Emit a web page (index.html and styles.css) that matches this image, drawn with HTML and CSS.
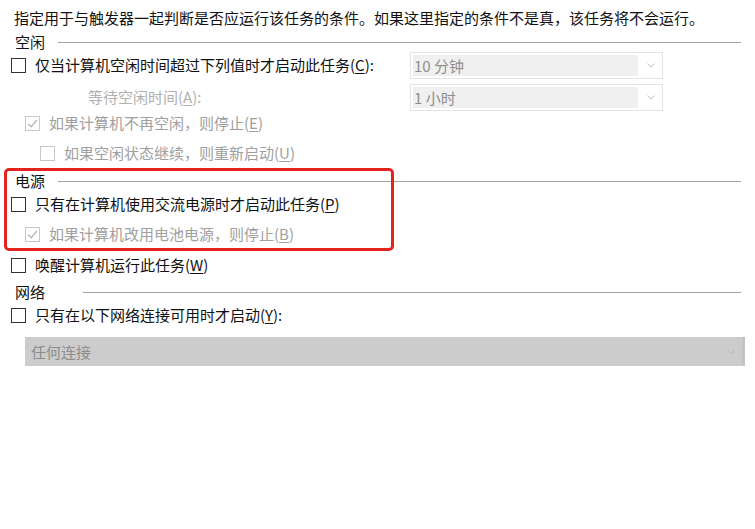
FILE: index.html
```html
<!DOCTYPE html>
<html lang="zh-CN">
<head>
<meta charset="utf-8">
<title>条件</title>
<link rel="stylesheet" href="styles.css">
</head>
<body>
<div class="page">
  <p class="desc">指定用于与触发器一起判断是否应运行该任务的条件。如果这里指定的条件不是真，该任务将不会运行。</p>

  <div class="head head-idle"><span>空闲</span><i class="rule"></i></div>

  <div class="row row-c">
    <div class="lbl-cell">
      <label class="opt"><span class="cb"></span><span>仅当计算机空闲时间超过下列值时才启动此任务(<u>C</u>):</span></label>
    </div>
    <div class="combo"><span class="combo-val">10 分钟</span><span class="combo-btn"><svg width="8" height="5" viewBox="0 0 8 5"><polyline points="0.5,0.5 4,4 7.5,0.5" fill="none" stroke="#c4c4c4" stroke-width="1"/></svg></span></div>
  </div>

  <div class="row row-a">
    <div class="lbl-cell lbl-wait"><span class="dim dim-light">等待空闲时间(<u>A</u>):</span></div>
    <div class="combo"><span class="combo-val">1 小时</span><span class="combo-btn"><svg width="8" height="5" viewBox="0 0 8 5"><polyline points="0.5,0.5 4,4 7.5,0.5" fill="none" stroke="#c4c4c4" stroke-width="1"/></svg></span></div>
  </div>

  <div class="row row-e indent1">
    <label class="opt"><span class="cb off"><svg width="13" height="13" viewBox="0 0 13 13"><polyline points="2.2,6.8 5.2,9.8 10.8,3" fill="none" stroke="#b4b4b4" stroke-width="1.3"/></svg></span><span class="dim">如果计算机不再空闲，则停止(<u>E</u>)</span></label>
  </div>

  <div class="row row-u indent2">
    <label class="opt"><span class="cb off"></span><span class="dim">如果空闲状态继续，则重新启动(<u>U</u>)</span></label>
  </div>

  <div class="power">
    <div class="head"><span>电源</span><i class="rule"></i></div>
    <div class="row row-p">
      <label class="opt"><span class="cb"></span><span>只有在计算机使用交流电源时才启动此任务(<u>P</u>)</span></label>
    </div>
    <div class="row row-b indent1">
      <label class="opt"><span class="cb off"><svg width="13" height="13" viewBox="0 0 13 13"><polyline points="2.2,6.8 5.2,9.8 10.8,3" fill="none" stroke="#b4b4b4" stroke-width="1.3"/></svg></span><span class="dim">如果计算机改用电池电源，则停止(<u>B</u>)</span></label>
    </div>
  </div>

  <div class="row row-w">
    <label class="opt"><span class="cb"></span><span>唤醒计算机运行此任务(<u>W</u>)</span></label>
  </div>

  <div class="head head-net"><span>网络</span><i class="rule rule-net"></i></div>

  <div class="row row-y">
    <label class="opt"><span class="cb"></span><span>只有在以下网络连接可用时才启动(<u>Y</u>):</span></label>
  </div>

  <div class="net-combo"><span class="net-val">任何连接</span><svg width="8" height="5" viewBox="0 0 8 5"><polyline points="0.5,0.5 4,4 7.5,0.5" fill="none" stroke="#b8b8b8" stroke-width="1"/></svg></div>
</div>
</body>
</html>
```
FILE: styles.css
```css
html, body {
  margin: 0;
  background: #ffffff;
}
body {
  font-family: "Noto Sans CJK SC", "Microsoft YaHei", sans-serif;
  font-size: 15px;
  color: #111111;
}
.page {
  display: flex;
  flex-direction: column;
  padding: 7px 10px 0 0;
}
.desc {
  margin: 0;
  padding-left: 14px;
  height: 22px;
  line-height: 22px;
  white-space: nowrap;
}
u {
  text-decoration: underline;
  text-underline-offset: 2px;
}
.head {
  display: flex;
  align-items: center;
  height: 22px;
  line-height: 22px;
  padding-left: 15px;
}
.head-idle { margin-top: 2px; }
.head-net { margin-top: 5px; }
.rule {
  flex: 1;
  height: 1px;
  margin: 1px 4px 0 13px;
  background: #a3a3a3;
}
.rule-net { margin-left: 38px; }

.row {
  display: flex;
  align-items: center;
  height: 22px;
  line-height: 22px;
  padding-left: 11px;
  white-space: nowrap;
}
.indent1 { padding-left: 25px; }
.indent2 { padding-left: 40px; }
.row-c { margin-top: 1px; }
.row-a { margin-top: 10px; }
.row-e { margin-top: 4px; }
.row-u { margin-top: 8px; }
.row-p { margin-top: 1px; }
.row-b { margin-top: 8px; }
.row-w { margin-top: 9px; }
.row-y { margin-top: 1px; }

.opt {
  display: flex;
  align-items: center;
  gap: 9px;
}
.cb {
  flex: none;
  width: 15px;
  height: 15px;
  box-sizing: border-box;
  border: 1px solid #333333;
  background: #ffffff;
  display: flex;
  align-items: center;
  justify-content: center;
}
.cb.off { border-color: #c8c8c8; }
.dim { color: #a0a0a0; }
.dim-light { color: #b0b0b0; }

.lbl-cell {
  flex: none;
  width: 399px;
}
.lbl-wait { padding-left: 77px; box-sizing: border-box; }

.combo {
  flex: none;
  width: 253px;
  height: 27px;
  box-sizing: border-box;
  border: 1px solid #e4e4e4;
  padding: 2px;
  display: flex;
  background: #ffffff;
}
.combo-val {
  flex: none;
  width: 225px;
  background: #f0f0f0;
  color: #8e8e8e;
  padding-left: 1px;
  line-height: 21px;
  box-sizing: border-box;
}
.combo-btn {
  flex: 1;
  display: flex;
  align-items: center;
  justify-content: center;
  padding-left: 4px;
}

.power {
  position: relative;
  margin-top: 6px;
}
.power::after {
  content: "";
  position: absolute;
  left: 4px;
  top: -2px;
  bottom: -6px;
  width: 390px;
  box-sizing: border-box;
  border: 3px solid #e4231e;
  border-radius: 5px;
  pointer-events: none;
}

.net-combo {
  margin: 11px -10px 0 25px;
  width: 720px;
  height: 29px;
  box-sizing: border-box;
  background: #cccccc;
  border-right: 3px solid #c3c3c3;
  display: flex;
  align-items: center;
  justify-content: space-between;
  padding: 0 7px 0 6px;
  color: #8c8c8c;
}
.net-val { line-height: 29px; }
```
